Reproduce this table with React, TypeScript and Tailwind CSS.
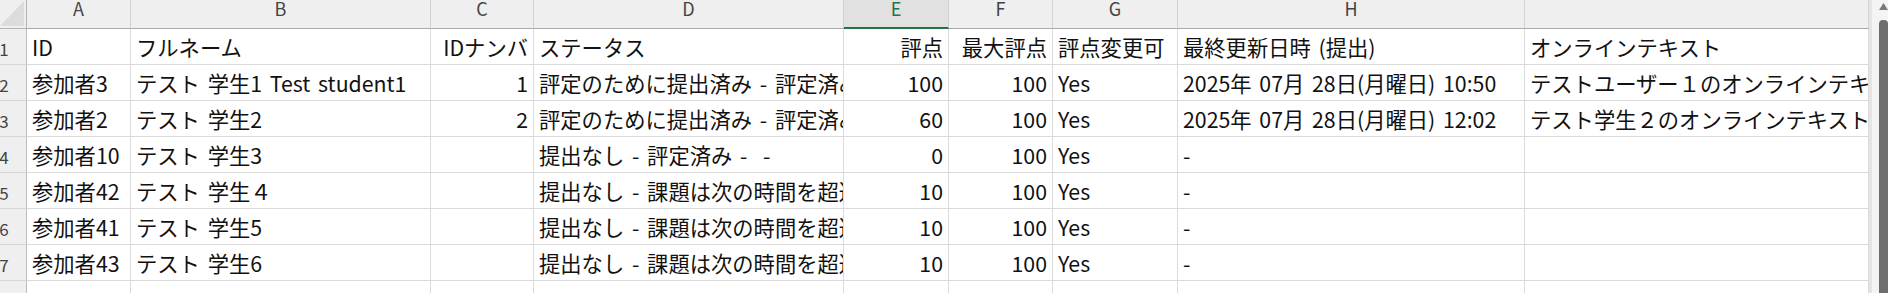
import React from "react";

type Align = "l" | "r";

const COLS = ["A", "B", "C", "D", "E", "F", "G", "H", ""];
const WIDTHS = [104, 300, 103, 310, 105, 104, 125, 347, 344];
const ALIGN: Align[] = ["l", "l", "r", "l", "r", "r", "l", "l", "l"];

const ROWS: string[][] = [
  ["ID", "フルネーム", "IDナンバ", "ステータス", "評点", "最大評点", "評点変更可", "最終更新日時 (提出)", "オンラインテキスト"],
  ["参加者3", "テスト 学生1 Test student1", "1", "評定のために提出済み - 評定済み", "100", "100", "Yes", "2025年 07月 28日(月曜日) 10:50", "テストユーザー１のオンラインテキスト"],
  ["参加者2", "テスト 学生2", "2", "評定のために提出済み - 評定済み", "60", "100", "Yes", "2025年 07月 28日(月曜日) 12:02", "テスト学生２のオンラインテキスト"],
  ["参加者10", "テスト 学生3", "", "提出なし - 評定済み -  -", "0", "100", "Yes", "-", ""],
  ["参加者42", "テスト 学生４", "", "提出なし - 課題は次の時間を超過しました", "10", "100", "Yes", "-", ""],
  ["参加者41", "テスト 学生5", "", "提出なし - 課題は次の時間を超過しました", "10", "100", "Yes", "-", ""],
  ["参加者43", "テスト 学生6", "", "提出なし - 課題は次の時間を超過しました", "10", "100", "Yes", "-", ""],
  ["", "", "", "", "", "", "", "", ""],
];

const font = { fontFamily: '"Noto Sans CJK JP", "Noto Sans", sans-serif' };

function CornerCell() {
  return (
    <div className="w-[27px] h-[29px] shrink-0 bg-[#efefef] border-r border-b border-[#b4b4b4] relative">
      <svg width="27" height="29" className="absolute left-0 top-0">
        <polygon points="24,1 24,26 0,26" fill="#dcdcdc" />
      </svg>
    </div>
  );
}

function ColHeader({ label, width, selected }: { label: string; width: number; selected: boolean }) {
  return (
    <div
      style={{ width }}
      className={
        selected
          ? "h-[29px] shrink-0 flex justify-center bg-[#e1e1e1] border-r border-[#d2d2d2] border-b-2 border-b-[#217346] text-[#217346] text-[18px] leading-[16px]"
          : "h-[29px] shrink-0 flex justify-center bg-[#efefef] border-r border-[#d2d2d2] border-b border-b-[#a9a9a9] text-[#444444] text-[18px] leading-[16px]"
      }
    >
      {label}
    </div>
  );
}

function RowNumber({ n }: { n: number }) {
  return (
    <div className="w-[27px] h-[36px] shrink-0 bg-[#efefef] border-r border-[#bdbdbd] border-b border-b-[#d6d6d6] overflow-hidden flex items-center">
      <div className="w-[40px] shrink-0 ml-[-16px] text-center text-[17px] leading-none text-[#444444] pt-[3px]">{n}</div>
    </div>
  );
}

function Cell({ text, width, align }: { text: string; width: number; align: Align }) {
  return (
    <div
      style={{ width }}
      className="h-[36px] shrink-0 border-r border-b border-[#dadada] bg-white overflow-hidden flex items-center"
    >
      <div
        className={
          align === "r"
            ? "w-full px-[5px] text-right whitespace-pre text-[21.3px] leading-none text-[#111111] [word-spacing:3px]"
            : "w-full px-[5px] text-left whitespace-pre text-[21.3px] leading-none text-[#111111] [word-spacing:3px]"
        }
      >
        {text}
      </div>
    </div>
  );
}

function ScrollBar() {
  return (
    <div className="w-[19px] h-[293px] shrink-0 flex">
      <div className="w-[3px] h-full bg-[#e7e3de]" />
      <div className="w-[7px] h-full bg-[#f4f4f4]" />
      <div className="flex-1 h-full bg-[#f4f4f4] flex flex-col items-start">
        <svg width="9" height="12" className="mt-[2px]">
          <polygon points="4.5,1 9,8 0,8" fill="#7a7a7a" />
        </svg>
        <div className="w-[9px] flex-1 mt-[6px] bg-[#6e6e6e] rounded-t-[4px]" />
      </div>
    </div>
  );
}

export default function App() {
  return (
    <div className="w-[1888px] h-[293px] overflow-hidden bg-white flex" style={font}>
      <div className="flex flex-col w-[1869px] shrink-0">
        <div className="flex">
          <CornerCell />
          {COLS.map((c, i) => (
            <ColHeader key={i} label={c} width={WIDTHS[i]} selected={c === "E"} />
          ))}
        </div>
        {ROWS.map((row, r) => (
          <div key={r} className="flex">
            <RowNumber n={r + 1} />
            {row.map((t, i) => (
              <Cell key={i} text={t} width={WIDTHS[i]} align={ALIGN[i]} />
            ))}
          </div>
        ))}
      </div>
      <ScrollBar />
    </div>
  );
}
